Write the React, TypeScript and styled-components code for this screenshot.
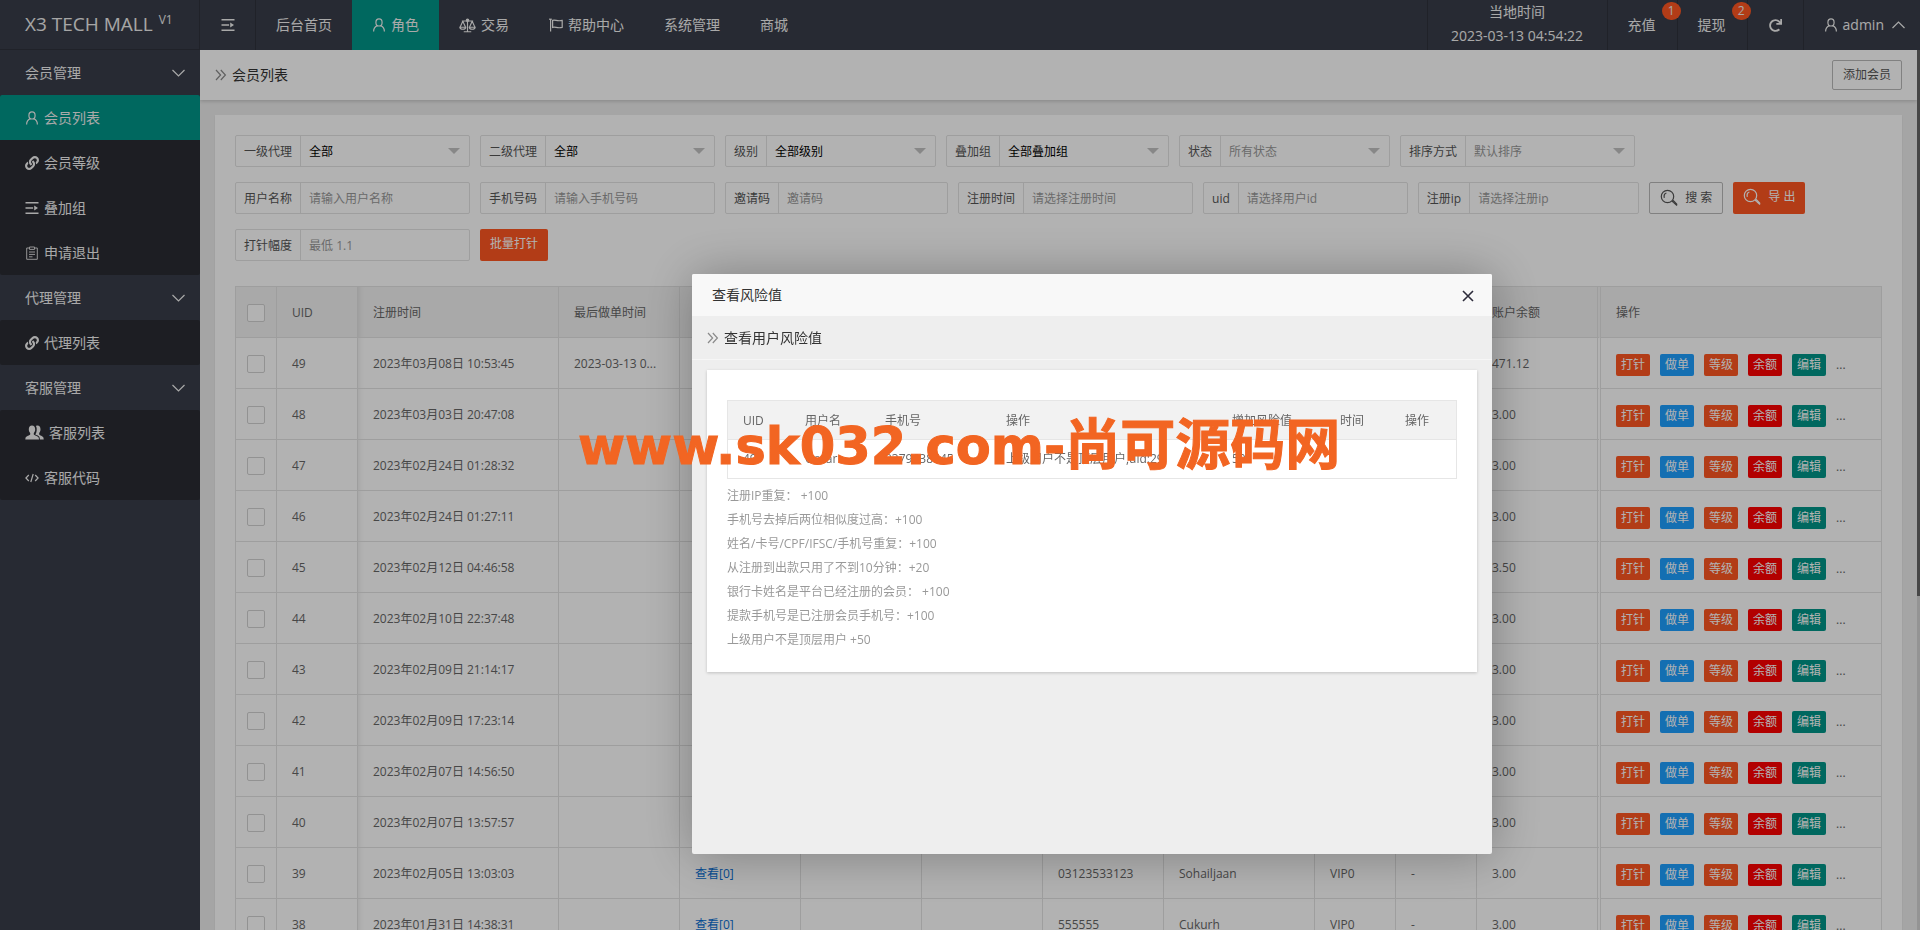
import React from 'react';
import styled, { createGlobalStyle } from 'styled-components';
import { FaLink, FaRedo } from 'react-icons/fa';

const font = '"Open Sans", "Noto Sans CJK SC", sans-serif';

const GlobalStyle = createGlobalStyle`
  *, *::before, *::after { box-sizing: border-box; }
  body { margin: 0; font: 14px/24px ${font}; color: #333; background: #eee; overflow: hidden; }
  button, input, select { font: inherit; margin: 0; }
  a { text-decoration: none; color: inherit; }
  ul { list-style: none; margin: 0; padding: 0; }
  svg { display: block; flex: none; }
`;

/* ---------- icons ---------- */

const Stroke = styled.svg`
  fill: none;
  stroke: currentColor;
  stroke-width: 1.2;
`;

const UserIcon = () => (
  <Stroke width="14" height="14" viewBox="0 0 14 14">
    <ellipse cx="7" cy="4.4" rx="3.1" ry="3.6" />
    <path d="M5.4 7.6C3 8.6 1.6 10.4 1.6 13.4M8.6 7.6c2.4 1 3.8 2.8 3.8 5.8" />
  </Stroke>
);

const ScaleIcon = () => (
  <Stroke width="17" height="15" viewBox="0 0 18 16">
    <path d="M9 1v13M5 14.7h8M3 3.2h12M4 3.4L1.2 9.6M4 3.4l2.8 6.2M14 3.4l-2.8 6.2M14 3.4l2.8 6.2" />
    <path d="M.8 9.8h6.4c-.4 3-6 3-6.4 0zM10.8 9.8h6.4c-.4 3-6 3-6.4 0z" />
    <circle cx="9" cy="2.4" r="1.3" />
  </Stroke>
);

const FlagIcon = () => (
  <Stroke width="14" height="14" viewBox="0 0 14 14">
    <path d="M1.6 1v12.4M3.6 2.4c3-1 4.4 1.3 9.600 0v7c-5.200 1.300-6.600-1-9.600 0z" />
    <path d="M0 1.200h2.800" />
  </Stroke>
);

const SpreadIcon = () => (
  <svg width="14" height="14" viewBox="0 0 14 14" fill="currentColor">
    <path d="M.5 1h13v1.600H.5zM.5 6.200h7.600v1.600H.5zM.5 11.400h13V13H.5zM9.200 4.400L13 7 9.200 9.600z" />
  </svg>
);

const FormIcon = () => (
  <Stroke width="14" height="14" viewBox="0 0 14 14" opacity="0.85">
    <path d="M4 2H1.700v11.300h10.600V2H10M4.500 1h5v2.400h-5zM4 6h6M4 8.400h6M4 10.800h3.500" strokeWidth="1" />
  </Stroke>
);

const FriendsIcon = () => (
  <svg width="19" height="15" viewBox="0 0 19 15" fill="currentColor">
    <path d="M7 0.500c2 0 3.200 1.500 3.200 3.800 0 1.600-.6 3-1.400 3.800v1.500c0 .8 4.700 1.400 5 3.400l.2 1.500H.3l.2-1.500c.3-2 4.700-2.600 4.700-3.400V8.100C4.400 7.300 3.800 5.900 3.800 4.300 3.800 2 5 .5 7 .5z" />
    <path d="M11 1c.5-.3 1-.4 1.500-.4 1.900 0 3 1.500 3 3.700 0 1.600-.5 2.800-1.300 3.600v1.500c0 .8 4.100 1.600 4.300 3.400l.2 1.700h-3.800c0-3.300-1.400-3.800-4.600-5 1.500-2 2-6 .7-8.500z" />
  </svg>
);

const CodeIcon = () => (
  <Stroke width="14" height="14" viewBox="0 0 14 14">
    <path d="M3.800 4L.9 7l2.900 3M10.200 4l2.900 3-2.900 3M8.200 3L5.800 11" />
  </Stroke>
);

const Chevron = ({ up }: { up?: boolean }) => (
  <Stroke width="13" height="8" viewBox="0 0 13 8">
    <path d={up ? 'M.5 7l6-6 6 6' : 'M.5 1l6 6 6-6'} />
  </Stroke>
);

const DoubleChevron = () => (
  <Stroke width="12" height="12" viewBox="0 0 12 12" color="#8a8a8a">
    <path d="M1 1l4.600 5L1 11M5.800 1l4.600 5-4.600 5" />
  </Stroke>
);

const SearchIcon = () => (
  <Stroke width="18" height="18" viewBox="0 0 18 18">
    <circle cx="7.500" cy="7.500" r="6.200" />
    <path d="M4.300 8.800C3.700 6.400 4.700 4.600 6.400 4" />
    <path d="M12 12l1.400 1.400 3.600 3.200M12.800 11.200l1.400 1.200 3 3.200" />
  </Stroke>
);

const CloseIcon = () => (
  <Stroke width="12" height="12" viewBox="0 0 12 12">
    <path d="M1 1l10 10M11 1L1 11" />
  </Stroke>
);

/* ---------- frame ---------- */

const Page = styled.div`
  display: grid;
  grid-template: 50px minmax(0, 1fr) / 200px minmax(0, 1fr);
  height: 100vh;
  overflow: hidden;
`;

const Header = styled.header`
  grid-column: 1 / -1;
  display: flex;
  height: 50px;
  background: #393d49;
  color: #f2f2f2;
`;

const Logo = styled.a`
  display: flex;
  align-items: center;
  width: 200px;
  padding-left: 25px;
  padding-bottom: 2px;
  gap: 6px;
  font-size: 19px;
  border-right: 1px solid #2f323c;
  border-bottom: 1px solid #2f323c;
  color: #eee;
  white-space: nowrap;

  sup { font-size: 12px; line-height: 12px; align-self: flex-start; margin-top: 14px; }
`;

const HeaderItem = styled.a<{ $active?: boolean; $line?: boolean }>`
  display: flex;
  align-items: center;
  gap: 5px;
  padding: 0 20px;
  white-space: nowrap;
  background: ${(p) => (p.$active ? '#009688' : 'transparent')};
  border-right: ${(p) => (p.$line ? '1px solid #2f323c' : '0')};
`;

const IconItem = styled(HeaderItem)`
  width: 56px;
  padding: 0;
  justify-content: center;
`;

const UserItem = styled(HeaderItem)`
  padding-right: 15px;

  span { margin-right: 3px; }
`;

const HeaderRight = styled.div`
  display: flex;
  margin-left: auto;
  border-left: 1px solid #2f323c;
`;

const Clock = styled.div`
  width: 180px;
  text-align: center;
  border-right: 1px solid #2f323c;

  time { display: block; }
`;

const CountItem = styled(HeaderItem)`
  position: relative;
  width: 70px;
`;

const Badge = styled.span`
  position: absolute;
  top: 2px;
  right: -4px;
  z-index: 1;
  width: 19px;
  height: 18px;
  border-radius: 9px;
  background: #ff5722;
  font-size: 12px;
  line-height: 18px;
  text-align: center;
`;

const Sidebar = styled.nav`
  background: #393d49;
  color: #f2f2f2;
`;

const GroupButton = styled.button`
  display: flex;
  align-items: center;
  justify-content: space-between;
  width: 100%;
  height: 45px;
  padding: 0 15px 0 25px;
  border: 0;
  background: none;
  color: inherit;
`;

const SubList = styled.ul`
  background: #2a2c33;
  border-radius: 2px;
  overflow: hidden;
`;

const SubLink = styled.a<{ $active?: boolean }>`
  display: flex;
  align-items: center;
  gap: 5px;
  height: 45px;
  padding-left: 25px;
  background: ${(p) => (p.$active ? '#009688' : 'transparent')};
`;

const Body = styled.div`
  display: flex;
  min-width: 0;
  overflow: hidden;
  background: #ededed;
`;

const Main = styled.main`
  flex: 1;
  min-width: 0;
`;

const ScrollTrack = styled.div`
  width: 3px;
  background: #d4d4d4;
`;

const ScrollThumb = styled.div`
  height: 62%;
  background: #666;
`;

const Crumb = styled.div`
  display: flex;
  align-items: center;
  gap: 5px;
  height: 50px;
  padding: 0 15px;
  background: #fff;
  box-shadow: 0 1px 4px rgba(0, 0, 0, 0.2);

  button { margin-left: auto; }
`;

const Card = styled.section`
  margin: 15px;
  padding: 20px;
  background: #fff;
  box-shadow: 0 1px 2px rgba(0, 0, 0, 0.08);
`;

/* ---------- filters ---------- */

const Filters = styled.form`
  display: flex;
  flex-direction: column;
  gap: 15px;
`;

const FilterRow = styled.div`
  display: flex;
  gap: 10px;
`;

const Field = styled.label<{ $select?: boolean }>`
  position: relative;
  display: flex;
  height: 32px;
  border: 1px solid #e2e2e2;
  border-radius: 2px;
  font-size: 12px;
  line-height: 32px;
  color: #555;
  white-space: nowrap;

  > span { padding: 0 8px; border-right: 1px solid #e2e2e2; }

  &::after {
    content: '';
    display: ${(p) => (p.$select ? 'block' : 'none')};
    position: absolute;
    right: 9px;
    top: 12px;
    border: 6px solid transparent;
    border-top-color: #c2c2c2;
    pointer-events: none;
  }
`;

const TextInput = styled.input`
  width: 168px;
  padding: 2px 8px 0;
  border: 0;
  background: none;
  color: #333;
  outline: 0;

  &::placeholder { color: #999; opacity: 1; }
`;

const SelectBox = styled.select<{ $muted?: boolean }>`
  width: 168px;
  padding: 0 8px;
  border: 0;
  background: none;
  appearance: none;
  outline: 0;
  color: ${(p) => (p.$muted ? '#999' : '#000')};
`;

const Button = styled.button<{ $small?: boolean }>`
  display: flex;
  align-items: center;
  justify-content: center;
  gap: 7px;
  height: ${(p) => (p.$small ? '30px' : '32px')};
  padding: 0 10px;
  border: 1px solid #b9b9b9;
  border-radius: 2px;
  background: #fff;
  color: #555;
  font-size: 12px;
  white-space: nowrap;
`;

const SolidButton = styled(Button)`
  padding-bottom: 2px;
  border: 0;
  background: #ff5722;
  color: #fff;
`;

/* ---------- member table ---------- */

const DataTable = styled.table`
  width: 100%;
  margin-top: 25px;
  table-layout: fixed;
  border-collapse: separate;
  border-spacing: 0;
  border-top: 1px solid #e2e2e2;
  border-left: 1px solid #e2e2e2;
  font-size: 12px;
  color: #666;

  th, td {
    height: 51px;
    padding: 2px 15px 0;
    border-right: 1px solid #e2e2e2;
    border-bottom: 1px solid #e2e2e2;
    text-align: left;
    font-weight: 400;
    white-space: nowrap;
  }
  th { background: #f2f2f2; }
  th:first-child, td:first-child { padding: 2px 0 0 11px; }
  th:nth-child(3), td:nth-child(3) { box-shadow: inset 6px 0 6px -6px rgba(0, 0, 0, 0.12); }
  th:nth-child(12), td:nth-child(12) { border-right: 4px double #e2e2e2; }
`;

const Check = styled.input`
  appearance: none;
  display: block;
  width: 18px;
  height: 18px;
  border: 1px solid #d2d2d2;
  border-radius: 2px;
  background: #fff;
`;

const ViewLink = styled.a`
  color: #0a6ed1;
`;

const Actions = styled.div`
  display: flex;
  align-items: center;
  gap: 10px;
  padding-top: 2px;
`;

const ActionButton = styled.button<{ $color: string }>`
  height: 22px;
  padding: 0 5px;
  border: 0;
  border-radius: 2px;
  background: ${(p) => p.$color};
  color: #fff;
  font-size: 12px;
  line-height: 22px;
`;

/* ---------- dialog ---------- */

const Shade = styled.div`
  position: fixed;
  inset: 0;
  z-index: 10;
  background: rgba(0, 0, 0, 0.3);
`;

const Dialog = styled.div`
  position: fixed;
  z-index: 11;
  top: 274px;
  left: calc(50% - 268px);
  width: 800px;
  height: 580px;
  border-radius: 2px;
  background: #eee;
  box-shadow: 1px 1px 50px rgba(0, 0, 0, 0.3);
`;

const DialogTitle = styled.div`
  display: flex;
  align-items: center;
  justify-content: space-between;
  height: 42px;
  padding: 0 18px 0 20px;
  border-radius: 2px 2px 0 0;
  background: #f8f8f8;
`;

const CloseButton = styled.button`
  padding: 2px 0 0;
  border: 0;
  background: none;
  color: #2d2c3b;

  svg { stroke-width: 1.6; }
`;

const DialogCrumb = styled.div`
  display: flex;
  align-items: center;
  gap: 5px;
  height: 44px;
  padding: 0 15px;
  border-bottom: 1px solid #f6f6f6;
`;

const DialogCard = styled.div`
  margin: 10px 15px;
  padding: 30px 20px 20px;
  background: #fff;
  box-shadow: 0 1px 3px rgba(0, 0, 0, 0.2);
  font-size: 12px;
  color: #999;
`;

const RiskTable = styled.table`
  width: 100%;
  margin-bottom: 5px;
  table-layout: fixed;
  border-collapse: separate;
  border-spacing: 0;
  border: 1px solid #e6e6e6;
  color: #666;

  th, td { padding: 0 0 0 15px; text-align: left; font-weight: 400; white-space: nowrap; }
  td { height: 38px; }
  th { height: 39px; padding-top: 2px; background: #f2f2f2; border-bottom: 1px solid #e6e6e6; }
`;

const Watermark = styled.div`
  position: fixed;
  z-index: 12;
  top: 407px;
  left: calc(50% - 382px);
  color: #f26522;
  font: bold 51px/76px "DejaVu Sans", "Noto Sans CJK SC", sans-serif;
  -webkit-text-stroke: 1px #f26522;
  white-space: nowrap;
  pointer-events: none;

  span { font-size: 55px; }
`;

/* ---------- data ---------- */

const menu = [
  {
    title: '会员管理',
    items: [
      { label: '会员列表', icon: <UserIcon />, active: true },
      { label: '会员等级', icon: <FaLink size={14} /> },
      { label: '叠加组', icon: <SpreadIcon /> },
      { label: '申请退出', icon: <FormIcon /> },
    ],
  },
  { title: '代理管理', items: [{ label: '代理列表', icon: <FaLink size={14} /> }] },
  {
    title: '客服管理',
    items: [
      { label: '客服列表', icon: <FriendsIcon /> },
      { label: '客服代码', icon: <CodeIcon /> },
    ],
  },
];

const selects = [
  ['一级代理', '全部'],
  ['二级代理', '全部'],
  ['级别', '全部级别'],
  ['叠加组', '全部叠加组'],
  ['状态', '所有状态', 'muted'],
  ['排序方式', '默认排序', 'muted'],
];

const inputs = [
  ['用户名称', '请输入用户名称'],
  ['手机号码', '请输入手机号码'],
  ['邀请码', '邀请码'],
  ['注册时间', '请选择注册时间'],
  ['uid', '请选择用户id'],
  ['注册ip', '请选择注册ip'],
];

const columnWidths = [41, 81, 201, 121, 121, 121, 121, 121, 151, 81, 81, 124];
const headings = ['UID', '注册时间', '最后做单时间', '', '', '', '', '', '', '', '账户余额'];

type Member = {
  uid: number;
  joined: string;
  balance: string;
  last?: string;
  view?: string;
  phone?: string;
  name?: string;
  level?: string;
  group?: string;
};

const members: Member[] = [
  { uid: 49, joined: '2023年03月08日 10:53:45', last: '2023-03-13 0...', balance: '471.12' },
  { uid: 48, joined: '2023年03月03日 20:47:08', balance: '3.00' },
  { uid: 47, joined: '2023年02月24日 01:28:32', balance: '3.00' },
  { uid: 46, joined: '2023年02月24日 01:27:11', balance: '3.00' },
  { uid: 45, joined: '2023年02月12日 04:46:58', balance: '3.50' },
  { uid: 44, joined: '2023年02月10日 22:37:48', balance: '3.00' },
  { uid: 43, joined: '2023年02月09日 21:14:17', balance: '3.00' },
  { uid: 42, joined: '2023年02月09日 17:23:14', balance: '3.00' },
  { uid: 41, joined: '2023年02月07日 14:56:50', balance: '3.00' },
  { uid: 40, joined: '2023年02月07日 13:57:57', balance: '3.00' },
  { uid: 39, joined: '2023年02月05日 13:03:03', view: '查看[0]', phone: '03123533123', name: 'Sohailjaan', level: 'VIP0', group: '-', balance: '3.00' },
  { uid: 38, joined: '2023年01月31日 14:38:31', view: '查看[0]', phone: '555555', name: 'Cukurh', level: 'VIP0', group: '-', balance: '3.00' },
];

const actions = [
  ['打针', '#ff5722'],
  ['做单', '#1e9fff'],
  ['等级', '#ff5722'],
  ['余额', '#ff0000'],
  ['编辑', '#009688'],
];

const riskColumns: [string, string, number][] = [
  ['UID', '49', 62],
  ['用户名', 'Oscar', 80],
  ['手机号', '0379638645', 121],
  ['操作', '上级用户不是顶层用户,uid:29', 226],
  ['增加风险值', '50', 108],
  ['时间', '', 65],
  ['操作', '', 66],
];

const rules = [
  '注册IP重复： +100',
  '手机号去掉后两位相似度过高：+100',
  '姓名/卡号/CPF/IFSC/手机号重复：+100',
  '从注册到出款只用了不到10分钟：+20',
  '银行卡姓名是平台已经注册的会员： +100',
  '提款手机号是已注册会员手机号：+100',
  '上级用户不是顶层用户 +50',
];

export default function App() {
  return (
    <>
      <GlobalStyle />
      <Page>
        <Header>
          <Logo href="#">X3 TECH MALL<sup>V1</sup></Logo>
          <IconItem href="#" $line aria-label="收起菜单"><SpreadIcon /></IconItem>
          <HeaderItem href="#">后台首页</HeaderItem>
          <HeaderItem href="#" $active><UserIcon />角色</HeaderItem>
          <HeaderItem href="#"><ScaleIcon />交易</HeaderItem>
          <HeaderItem href="#"><FlagIcon />帮助中心</HeaderItem>
          <HeaderItem href="#">系统管理</HeaderItem>
          <HeaderItem href="#">商城</HeaderItem>
          <HeaderRight>
            <Clock>当地时间<time>2023-03-13 04:54:22</time></Clock>
            <CountItem href="#" $line>充值<Badge>1</Badge></CountItem>
            <CountItem href="#" $line>提现<Badge>2</Badge></CountItem>
            <IconItem href="#" $line aria-label="刷新"><FaRedo size={13} /></IconItem>
            <UserItem href="#"><UserIcon /><span>admin</span><Chevron up /></UserItem>
          </HeaderRight>
        </Header>

        <Sidebar>
          {menu.map((group) => (
            <div key={group.title}>
              <GroupButton type="button">{group.title}<Chevron /></GroupButton>
              <SubList>
                {group.items.map((item) => (
                  <li key={item.label}>
                    <SubLink href="#" $active={'active' in item}>{item.icon}{item.label}</SubLink>
                  </li>
                ))}
              </SubList>
            </div>
          ))}
        </Sidebar>

        <Body>
          <Main>
            <Crumb>
              <DoubleChevron />会员列表
              <Button type="button" $small>添加会员</Button>
            </Crumb>
            <Card>
              <Filters>
                <FilterRow>
                  {selects.map(([label, value, muted]) => (
                    <Field key={label} $select>
                      <span>{label}</span>
                      <SelectBox $muted={!!muted}><option>{value}</option></SelectBox>
                    </Field>
                  ))}
                </FilterRow>
                <FilterRow>
                  {inputs.map(([label, hint]) => (
                    <Field key={label}>
                      <span>{label}</span>
                      <TextInput placeholder={hint} />
                    </Field>
                  ))}
                  <Button type="button"><SearchIcon />搜 索</Button>
                  <SolidButton type="button"><SearchIcon />导 出</SolidButton>
                </FilterRow>
                <FilterRow>
                  <Field><span>打针幅度</span><TextInput placeholder="最低 1.1" /></Field>
                  <SolidButton type="button">批量打针</SolidButton>
                </FilterRow>
              </Filters>

              <DataTable>
                <colgroup>
                  {columnWidths.map((w, i) => <col key={i} width={w} />)}
                  <col />
                </colgroup>
                <thead>
                  <tr>
                    <th><Check type="checkbox" aria-label="全选" /></th>
                    {headings.map((h, i) => <th key={i}>{h}</th>)}
                    <th>操作</th>
                  </tr>
                </thead>
                <tbody>
                  {members.map((m) => (
                    <tr key={m.uid}>
                      <td><Check type="checkbox" aria-label={String(m.uid)} /></td>
                      <td>{m.uid}</td>
                      <td>{m.joined}</td>
                      <td>{m.last}</td>
                      <td>{m.view && <ViewLink href="#">{m.view}</ViewLink>}</td>
                      <td />
                      <td />
                      <td>{m.phone}</td>
                      <td>{m.name}</td>
                      <td>{m.level}</td>
                      <td>{m.group}</td>
                      <td>{m.balance}</td>
                      <td>
                        <Actions>
                          {actions.map(([label, color]) => (
                            <ActionButton key={label} type="button" $color={color}>{label}</ActionButton>
                          ))}
                          ...
                        </Actions>
                      </td>
                    </tr>
                  ))}
                </tbody>
              </DataTable>
            </Card>
          </Main>
          <ScrollTrack><ScrollThumb /></ScrollTrack>
        </Body>
      </Page>

      <Shade />
      <Dialog role="dialog" aria-label="查看风险值">
        <DialogTitle>
          查看风险值
          <CloseButton type="button" aria-label="关闭"><CloseIcon /></CloseButton>
        </DialogTitle>
        <DialogCrumb><DoubleChevron />查看用户风险值</DialogCrumb>
        <DialogCard>
          <RiskTable>
            <colgroup>
              {riskColumns.map(([, , w], i) => <col key={i} width={w} />)}
            </colgroup>
            <thead>
              <tr>{riskColumns.map(([h], i) => <th key={i}>{h}</th>)}</tr>
            </thead>
            <tbody>
              <tr>{riskColumns.map(([, v], i) => <td key={i}>{v}</td>)}</tr>
            </tbody>
          </RiskTable>
          <ul>
            {rules.map((r) => <li key={r}>{r}</li>)}
          </ul>
        </DialogCard>
      </Dialog>
      <Watermark>www.sk032.com-<span>尚可源码网</span></Watermark>
    </>
  );
}
